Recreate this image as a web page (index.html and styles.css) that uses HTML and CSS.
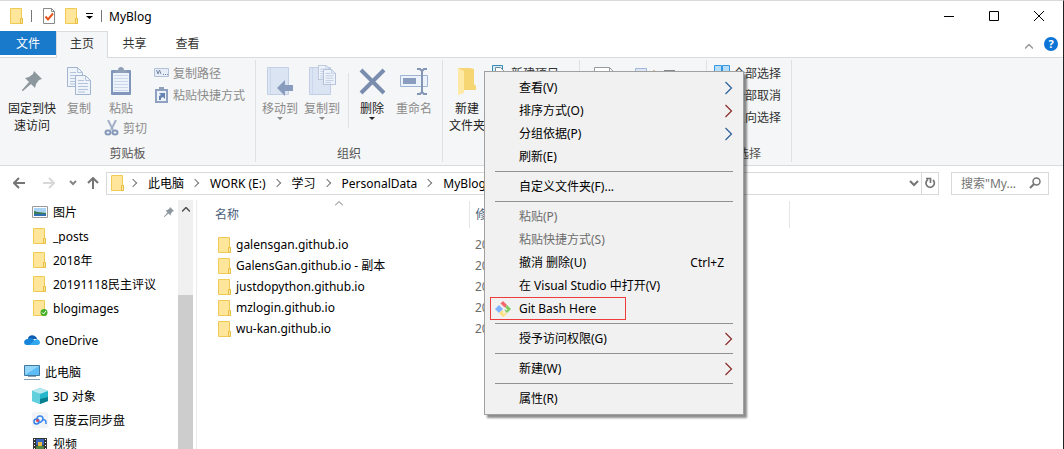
FILE: index.html
```html
<!DOCTYPE html>
<html lang="zh-CN">
  <head>
    <meta charset="utf-8">
    <meta name="viewport" content="width=device-width, initial-scale=1.0">
    <title>MyBlog</title>
    <link rel="stylesheet" href="styles.css">
  </head>
  <body>
    <svg class="sprite" aria-hidden="true">
      <symbol id="folder" viewBox="0 0 14 16">
        <path d="M.5.5h11v10h1v5H.5z" fill="#ffe69b" stroke="#efca55"/>
        <path d="M10.5 15.500v-5h2v5z" fill="#ffe69b" stroke="#e8bf45"/>
      </symbol>
      <symbol id="arrow" viewBox="0 0 8 14">
        <path d="M.5 1l6 6-6 6" fill="none" stroke="currentColor" stroke-width="1.200"/>
      </symbol>
      <symbol id="page" viewBox="0 0 16 20">
        <path d="M.5.5h10l5 5v14H.5z" fill="#eff4fb" stroke="#a3b4d0"/>
        <path d="M10.500.5v5h5M3 5.500h6M3 8.500h10M3 11.500h10M3 14.500h10M3 17h7" fill="none" stroke="#b4c3dc"/>
      </symbol>
      <symbol id="pin" viewBox="0 0 20 20">
        <path d="M12 0l8 8-3 1-3 4-1 4-4-4-8 7-1 0 0-1 7-8-4-4 4-1 4-3z" fill="#8d979e"/>
      </symbol>
      <symbol id="clip" viewBox="0 0 20 28">
        <rect y="3" width="20" height="25" rx="1" fill="#8196bb"/>
        <path d="M2 6h16v19H2z" fill="#edf3fb"/>
        <path d="M3 8.500h14M3 11.500h14M3 14.500h14M3 17.500h14M3 20.500h14M3 23.500h14" stroke="#ccd8ea"/>
        <path d="M4 3h3c0-4 6-4 6 0h3v3H4z" fill="#8f9fb8"/>
      </symbol>
      <symbol id="block" viewBox="0 0 26 28">
        <path d="M.5.5h21v27H.5z" fill="#dbe4f3" stroke="#c2cfe4"/>
        <path d="M3.500 1v26" stroke="#cbd7ea"/>
      </symbol>
    </svg>

    <header class="titlebar">
      <svg class="ico-folder"><use href="#folder"/></svg>
      <span class="divider"></span>
      <svg class="ico-check" viewBox="0 0 12 16"><path d="M.5.5h8l3 3v12H.5z" fill="#fff" stroke="#8a8a8a"/><path d="M8.500.5v3h3" fill="none" stroke="#8a8a8a"/><path d="M2.500 8.500l2.500 3 5-6" fill="none" stroke="#e8541d" stroke-width="2"/></svg>
      <svg class="ico-folder"><use href="#folder"/></svg>
      <svg class="ico-drop" viewBox="0 0 7 6"><path d="M0 0h7v1H0zM0 3h7L3.500 6z"/></svg>
      <span class="divider"></span>
      <h1 class="title">MyBlog</h1>
      <div class="window-buttons">
        <button aria-label="最小化"><svg viewBox="0 0 10 10"><path d="M0 5.500h10" stroke="#000"/></svg></button>
        <button aria-label="最大化"><svg viewBox="0 0 10 10"><path d="M.5.5h9v9h-9z" fill="none" stroke="#000"/></svg></button>
        <button aria-label="关闭"><svg viewBox="0 0 10 10"><path d="M0 0l10 10M10 0L0 10" stroke="#000"/></svg></button>
      </div>
    </header>

    <nav class="tabs">
      <button class="tab tab-file">文件</button>
      <button class="tab tab-active">主页</button>
      <button class="tab">共享</button>
      <button class="tab">查看</button>
      <button class="tab-tool" aria-label="折叠"><svg viewBox="0 0 8 5" class="ico-fold"><path d="M0 4.500l4-4 4 4" fill="none" stroke="#999" stroke-width="1.500"/></svg></button>
      <button class="tab-tool help">?</button>
    </nav>

    <section class="ribbon">
      <div class="group group-clipboard">
        <div class="group-body">
          <button class="big wide"><svg class="big-icon" viewBox="0 0 28 28"><use href="#pin" x="4" y="4" width="20" height="20"/></svg>固定到快<br>速访问</button>
          <button class="big" disabled><svg class="big-icon" viewBox="0 0 28 28"><use href="#page" x="2" width="16" height="20"/><use href="#page" x="10" y="8" width="16" height="20"/></svg>复制</button>
          <div class="stack">
            <button class="big" disabled><svg class="big-icon" viewBox="0 0 28 28"><use href="#clip" x="4" width="20" height="28"/></svg>粘贴</button>
            <button class="small" disabled><svg viewBox="0 0 16 16"><path d="M4 0l5 10M12 0L7 10" stroke="#a3b0c8" stroke-width="2"/><g fill="none" stroke="#8598ba" stroke-width="2"><ellipse cx="4" cy="12.500" rx="2.500" ry="2"/><ellipse cx="11" cy="12.500" rx="2.500" ry="2"/></g></svg>剪切</button>
          </div>
          <div class="stack rows">
            <button class="small" disabled><svg viewBox="0 0 16 16"><path d="M.5 3.500h14v8H.5z" fill="#e7eef8" stroke="#b3c1d8"/><path d="M2.500 5l1.500 4 1.500-4 1.500 4M9 9.500h1M11 9.500h1M13 9.500h1" fill="none" stroke="#7488a8"/></svg>复制路径</button>
            <button class="small" disabled><svg viewBox="0 0 16 16"><path d="M1 2h13v14H1z" fill="#8ea1c2"/><path d="M3 4h9v10H3z" fill="#edf3fb"/><path d="M5 0h5v3H5z" fill="#8f9fb8"/><path d="M5 13V9l2-1-2-2h6v6L9 10l-2 1v2z" fill="#6682b0"/></svg>粘贴快捷方式</button>
          </div>
        </div>
        <h2 class="group-title">剪贴板</h2>
      </div>

      <div class="group group-organize">
        <div class="group-body">
          <button class="big drop" disabled><svg class="big-icon" viewBox="0 0 28 28"><use href="#block" x="1" width="26" height="28"/><path d="M11 21l8-8v5h8v6h-8v5z" fill="#8a9cbd"/></svg>移动到</button>
          <button class="big drop" disabled><svg class="big-icon" viewBox="0 0 28 28"><use href="#block" x="1" width="26" height="28"/><use href="#page" x="10" y="-2" width="12" height="15"/><use href="#page" x="15" y="2" width="13" height="16"/></svg>复制到</button>
          <span class="rule"></span>
          <button class="big drop"><svg class="big-icon" viewBox="0 0 28 28"><path d="M3 3l23 23M26 3L3 26" stroke="#7b8daf" stroke-width="4"/></svg>删除</button>
          <button class="big" disabled><svg class="big-icon" viewBox="0 0 28 28"><path d="M.5 8.500h27v11H.5z" fill="#edf3fc" stroke="#9fb4d4"/><path d="M3 11h13v6H3z" fill="#8a9dbf"/><path d="M17 2h3l2 2 2-2h3M22 3v23M17 27h3l2-2 2 2h3" fill="none" stroke="#8395b5" stroke-width="2"/></svg>重命名</button>
        </div>
        <h2 class="group-title">组织</h2>
      </div>

      <div class="group group-new">
        <div class="group-body">
          <button class="big"><svg class="big-icon" viewBox="0 0 28 28"><path d="M5 1h12l4 1v15l2 2v4H10L5 26z" fill="#f6d673"/><path d="M5 1l6 3v22l-6 2z" fill="#ffe9a6"/></svg>新建<br>文件夹</button>
          <div class="stack rows">
            <button class="small"><svg viewBox="0 0 16 16"><path d="M.5.5h10v10H.5z" fill="#d5eefa" stroke="#3b8cb5"/><path d="M3.500 2.500h5l3 3v8h-8z" fill="#fff" stroke="#789"/></svg>新建项目</button>
          </div>
        </div>
      </div>

      <div class="group group-open">
        <div class="group-body">
          <svg class="big-icon" viewBox="0 0 28 28"><path d="M4.500.5h15l5 5v22h-20z" fill="#fff" stroke="#999"/><path d="M19.500.5v5h5" fill="none" stroke="#999"/></svg>
          <svg class="ico-open" viewBox="0 0 48 16"><path d="M1.500 1.500h11v9h-11z" fill="#dce6f6" stroke="#a5b7d6"/><path d="M4 4h6v4H4z" fill="#8d9cba"/><path d="M20 3v4" stroke="#c08a40"/><path d="M30 3h11v3H30z" fill="#888"/></svg>
        </div>
      </div>

      <div class="group group-select">
        <div class="group-body">
          <div class="stack rows">
            <button class="small"><svg viewBox="0 0 16 16"><path d="M.5.500h7v6h-7zM8.500.500h7v6h-7zM.500 8.500h7v6h-7zM8.500 8.500h7v6h-7z" fill="#b5dff9" stroke="#3897de"/></svg>全部选择</button>
            <button class="small"><svg viewBox="0 0 16 16"><path d="M.5.5h7v6h-7zM8.500.5h7v6h-7zM.5 8.500h7v6h-7zM8.500 8.500h7v6h-7z" fill="#fff" stroke="#9ab"/></svg>全部取消</button>
            <button class="small"><svg viewBox="0 0 16 16"><path d="M.5.5h7v6h-7zM8.500 8.500h7v6h-7z" fill="#b5dff9" stroke="#3897de"/></svg>反向选择</button>
          </div>
        </div>
        <h2 class="group-title">选择</h2>
      </div>
    </section>

    <div class="location">
      <button class="nav-button" aria-label="后退"><svg viewBox="0 0 12 12"><path d="M12 6H1M6 1L1 6l5 5" fill="none" stroke="#757575" stroke-width="2"/></svg></button>
      <button class="nav-button" aria-label="前进"><svg viewBox="0 0 12 12"><path d="M0 6h11M6 1l5 5-5 5" fill="none" stroke="#d8d8d8" stroke-width="2"/></svg></button>
      <button class="nav-button narrow" aria-label="最近"><svg viewBox="0 0 12 12"><path d="M3 4l3 3 3-3" fill="none" stroke="#858585" stroke-width="2"/></svg></button>
      <button class="nav-button" aria-label="向上"><svg viewBox="0 0 12 12"><path d="M6 12V1M1 6l5-5 5 5" fill="none" stroke="#757575" stroke-width="2"/></svg></button>
      <div class="address">
        <svg class="ico-folder"><use href="#folder"/></svg>
        <a class="crumb" href="#">此电脑</a>
        <a class="crumb" href="#">WORK (E:)</a>
        <a class="crumb" href="#">学习</a>
        <a class="crumb" href="#">PersonalData</a>
        <a class="crumb" href="#">MyBlog</a>
        <button class="address-drop" aria-label="历史"><svg viewBox="0 0 10 8"><path d="M1 2l4 4 4-4" fill="none" stroke="#757575" stroke-width="2"/></svg></button>
        <button class="refresh" aria-label="刷新"><svg viewBox="0 0 12 12"><path d="M4 2.500a4.200 4.200 0 1 0 5 .5M2 1.500h4.500V6" fill="none" stroke="#757575" stroke-width="1.700"/></svg></button>
      </div>
      <div class="search">
        <input type="text" aria-label="搜索" placeholder='搜索"My...'>
        <svg viewBox="0 0 12 12"><circle cx="7.500" cy="4.500" r="3.500" fill="none" stroke="#757575" stroke-width="1.500"/><path d="M5 7l-4 4" stroke="#757575" stroke-width="2"/></svg>
      </div>
    </div>

    <main class="content">
      <nav class="tree">
        <ul class="tree-list">
          <li><a class="node child" href="#"><svg viewBox="0 0 16 16"><path d="M.5 2.500h15v11H.5z" fill="#fff" stroke="#9a9a9a"/><path d="M2 4h12v8H2z" fill="#a9d4f5"/><path d="M2 7l4 1 8 1v1H2z" fill="#3d7a52"/><path d="M2 10h12v2H2z" fill="#2f70b5"/></svg>图片<svg class="pinned" viewBox="0 0 20 20"><use href="#pin"/></svg></a></li>
          <li><a class="node child" href="#"><svg><use href="#folder"/></svg>_posts</a></li>
          <li><a class="node child" href="#"><svg><use href="#folder"/></svg>2018年</a></li>
          <li><a class="node child" href="#"><svg><use href="#folder"/></svg>20191118民主评议</a></li>
          <li><a class="node child" href="#"><svg viewBox="0 0 16 16"><use href="#folder" x="1" width="14" height="16"/><circle cx="12" cy="12.500" r="3.500" fill="#43b02a"/><path d="M10 12.500l1.500 1.500 2.500-3" fill="none" stroke="#fff"/></svg>blogimages</a></li>
          <li class="root"><a class="node" href="#"><svg viewBox="0 0 16 16"><path d="M4 7c0-5 8-5 9 0z" fill="#0f5cb0"/><path d="M3 13c-4 0-4-6 1-6 2-2 5-1 6 1l4 5z" fill="#1684d8"/><path d="M5 13l6-5c2-2 5 0 5 2.500 0 1.500-1 2.500-3 2.500z" fill="#30a8ee"/></svg>OneDrive</a></li>
          <li class="root"><a class="node" href="#"><svg viewBox="0 0 16 16"><path d="M.5 1.500h15v10H.5z" fill="#5dbcf5" stroke="#41789c"/><path d="M1 2h14L1 11z" fill="#92d5fa"/><path d="M4 12.500h8M0 15.500h16" stroke="#8aa0b2"/></svg>此电脑</a></li>
          <li><a class="node child" href="#"><svg viewBox="0 0 16 16"><path d="M8 0l8 3v10l-8 3-8-3V3z" fill="#24b6cb"/><path d="M8 0l8 3-8 3-8-3z" fill="#b7e9ef"/><path d="M0 3l8 3v10l-8-3z" fill="#62cfdc"/><path d="M8 16v-5l8-2v4z" fill="#087f91"/></svg>3D 对象</a></li>
          <li><a class="node child" href="#"><svg viewBox="0 0 16 16"><rect width="16" height="16" rx="2" fill="#f1f3f6"/><g fill="none" stroke-width="1.500"><circle cx="4.500" cy="9.500" r="2.500" stroke="#2f80e8"/><path d="M5 7c0-4 6-4 6 0-1 3-3 4-5 3M11 8c3-1 3 2 3 4" stroke="#3888ee"/></g><circle cx="5.500" cy="8.500" r="1.500" fill="#e54357"/></svg>百度云同步盘</a></li>
          <li><a class="node child" href="#"><svg viewBox="0 0 16 16"><path d="M1 2h14v13H1z" fill="#333"/><path d="M4 3h8v6H4z" fill="#3766bc"/><path d="M6 6h4v4H6z" fill="#e7b93e"/><path d="M4 10h8v4H4z" fill="#548744"/><path d="M2.500 3v12M13.500 3v12" stroke="#fff" stroke-dasharray="1 2"/></svg>视频</a></li>
        </ul>
        <div class="scrollbar"><svg viewBox="0 0 8 5"><path d="M0 4.500l4-4 4 4" fill="none" stroke="#505050" stroke-width="1.500"/></svg><span class="thumb"></span></div>
      </nav>
      <div class="files">
        <table class="file-table">
          <thead>
            <tr><th class="col-name">名称<svg class="sort" viewBox="0 0 8 5"><path d="M0 4.500l4-4 4 4" fill="none" stroke="#777"/></svg></th><th class="col-date">修改日期</th><th></th></tr>
          </thead>
          <tbody>
            <tr><td><a href="#"><svg class="ico-folder"><use href="#folder"/></svg>galensgan.github.io</a></td><td>2019</td><td></td></tr>
            <tr><td><a href="#"><svg class="ico-folder"><use href="#folder"/></svg>GalensGan.github.io - 副本</a></td><td>2019</td><td></td></tr>
            <tr><td><a href="#"><svg class="ico-folder"><use href="#folder"/></svg>justdopython.github.io</a></td><td>2019</td><td></td></tr>
            <tr><td><a href="#"><svg class="ico-folder"><use href="#folder"/></svg>mzlogin.github.io</a></td><td>2019</td><td></td></tr>
            <tr><td><a href="#"><svg class="ico-folder"><use href="#folder"/></svg>wu-kan.github.io</a></td><td>2019</td><td></td></tr>
          </tbody>
        </table>
      </div>
    </main>

    <div class="menu" role="menu">
      <button class="item" role="menuitem">查看(V)<svg class="more blue"><use href="#arrow"/></svg></button>
      <button class="item" role="menuitem">排序方式(O)<svg class="more"><use href="#arrow"/></svg></button>
      <button class="item" role="menuitem">分组依据(P)<svg class="more blue"><use href="#arrow"/></svg></button>
      <button class="item" role="menuitem">刷新(E)</button>
      <hr>
      <button class="item" role="menuitem">自定义文件夹(F)...</button>
      <hr>
      <button class="item" role="menuitem" disabled>粘贴(P)</button>
      <button class="item" role="menuitem" disabled>粘贴快捷方式(S)</button>
      <button class="item" role="menuitem">撤消 删除(U)<span class="shortcut">Ctrl+Z</span></button>
      <button class="item" role="menuitem">在 Visual Studio 中打开(V)</button>
      <button class="item git" role="menuitem"><svg class="git-icon" viewBox="0 0 16 16"><path d="M5 3l3-3 4 4-2 3-2-1z" fill="#f5696e"/><path d="M4 4l4 4-4 4-4-4z" fill="#80b3ff"/><path d="M12 4l4 4-4 4-3-3z" fill="#80cc60"/><path d="M8 9l4 4-4 3-4-4z" fill="#ffe080"/><path d="M5 3l4 4v6M8 6l4 3" fill="none" stroke="#f1f1f1" stroke-width="1.500"/></svg><span>Git Bash Here</span></button>
      <hr>
      <button class="item" role="menuitem">授予访问权限(G)<svg class="more"><use href="#arrow"/></svg></button>
      <hr>
      <button class="item" role="menuitem">新建(W)<svg class="more"><use href="#arrow"/></svg></button>
      <hr>
      <button class="item" role="menuitem">属性(R)</button>
    </div>
  </body>
</html>
```
FILE: styles.css
```css
* {
  box-sizing: border-box;
}
body {
  display: flex;
  flex-direction: column;
  height: 100vh;
  margin: 0;
  overflow: hidden;
  border-top: 1px solid #d9d9d9;
  border-right: 1px solid #222;
  background: #fff;
  color: #000;
  font: 12px/17px "Noto Sans", "Noto Sans CJK SC", sans-serif;
}
button {
  padding: 0;
  border: 0;
  background: none;
  color: inherit;
  font: inherit;
}
a {
  color: inherit;
  text-decoration: none;
}
ul {
  margin: 0;
  padding: 0;
  list-style: none;
}
svg {
  flex: none;
}
.sprite {
  position: absolute;
  width: 0;
  height: 0;
}
.ico-folder {
  width: 14px;
  height: 16px;
}

/* title bar */
.titlebar {
  display: flex;
  flex: none;
  align-items: center;
  height: 30px;
  padding: 0 2px 0 10px;
}
.divider {
  width: 1px;
  height: 12px;
  margin: 0 11px 0 7px;
  background: #777;
}
.ico-check {
  width: 12px;
  height: 16px;
  margin-right: 10px;
}
.ico-drop {
  width: 7px;
  height: 6px;
  margin-left: 7px;
}
.titlebar .ico-drop + .divider {
  margin: 0 7px 0 8px;
}
.title {
  margin: 0;
  font-size: 12px;
  font-weight: normal;
}
.window-buttons {
  display: flex;
  margin-left: auto;
}
.window-buttons button {
  width: 45px;
  height: 28px;
}
.window-buttons svg {
  width: 10px;
  height: 10px;
}

/* tabs */
.tabs {
  display: flex;
  flex: none;
  height: 27px;
  border-bottom: 1px solid #dadbdc;
}
.tab {
  width: 53px;
  height: 24px;
  color: #333;
}
.tab-file {
  width: 56px;
  background: #1979ca;
  color: #fff;
}
.tab-active {
  width: 52px;
  height: 27px;
  padding-bottom: 3px;
  border: 1px solid #dadbdc;
  border-bottom: 0;
  background: #f5f6f7;
}
.tab-tool {
  align-self: center;
  margin-right: 11px;
}
.tab + .tab-tool {
  margin-left: auto;
}
.ico-fold {
  width: 8px;
  height: 5px;
}
.help {
  width: 14px;
  height: 14px;
  margin-right: 5px;
  border-radius: 50%;
  background: #0c74d6;
  color: #fff;
  font-size: 11px;
  font-weight: bold;
  line-height: 14px;
}

/* ribbon */
.ribbon {
  display: flex;
  flex: none;
  height: 108px;
  padding: 2px 0 3px;
  border-bottom: 1px solid #dadbdc;
  background: #f5f6f7;
}
.group {
  display: flex;
  flex: none;
  flex-direction: column;
  justify-content: space-between;
  border-right: 1px solid #e0e1e3;
}
.group-body {
  display: flex;
  align-items: flex-start;
  padding: 7px 3px 0;
}
.group-title {
  margin: 0;
  color: #555;
  font-size: 12px;
  font-weight: normal;
  text-align: center;
}
.group-clipboard {
  width: 256px;
}
.group-organize {
  width: 187px;
}
.group-new {
  width: 137px;
}
.group-open {
  width: 127px;
}
.group-select {
  width: 85px;
}
.big {
  display: block;
  width: 42px;
  color: #222;
  text-align: center;
  white-space: nowrap;
}
.wide {
  width: 58px;
  margin-right: -3px;
}
.big-icon {
  display: block;
  width: 28px;
  height: 28px;
  margin: 0 auto 5px;
  overflow: visible;
}
.big:disabled,
.small:disabled {
  color: #8b8b8b;
}
.drop::after {
  content: "";
  display: block;
  width: 0;
  margin: 0 auto;
  border: 3px solid transparent;
  border-top-color: currentColor;
  border-bottom: 0;
}
.rule {
  height: 55px;
  margin: 6px 2px 0 5px;
  border-left: 1px solid #e0e1e3;
}
.stack {
  display: flex;
  flex-direction: column;
  gap: 2px;
}
.rows {
  gap: 4px;
  margin: -3px 0 0 4px;
}
.small {
  display: flex;
  align-items: center;
  gap: 3px;
  height: 18px;
  color: #333;
  white-space: nowrap;
}
.small svg {
  width: 16px;
  height: 16px;
}
.stack .big + .small {
  margin-left: 4px;
}
.group-clipboard .rows {
  margin-left: 7px;
}
.group-open .big-icon {
  margin: 0 16px 0 7px;
}
.ico-open {
  width: 48px;
  height: 16px;
}

/* address bar */
.location {
  display: flex;
  flex: none;
  align-items: center;
  height: 34px;
  padding: 0 14px 0 10px;
}
.nav-button {
  width: 18px;
  height: 18px;
  margin-right: 12px;
}
.nav-button svg {
  display: block;
  width: 12px;
  height: 12px;
  margin: auto;
}
.nav-button + .nav-button {
  margin-right: 8px;
}
.nav-button + .narrow {
  width: 14px;
  margin-right: 4px;
}
.narrow + .nav-button {
  margin-right: 4px;
}
.address {
  display: flex;
  flex: 1;
  align-items: center;
  height: 23px;
  padding-left: 4px;
  border: 1px solid #d9d9d9;
}
.crumb::before {
  content: "";
  display: inline-block;
  width: 5px;
  height: 5px;
  margin: 0 12px 2px 5px;
  border: solid #777;
  border-width: 1px 1px 0 0;
  transform: rotate(45deg);
}
.crumb + .crumb::before {
  margin-left: 8px;
}
.address-drop {
  margin-left: auto;
  padding: 0 2px;
}
.address-drop svg {
  display: block;
  width: 10px;
  height: 8px;
}
.refresh {
  width: 17px;
  height: 21px;
  border-left: 1px solid #d9d9d9;
}
.refresh svg {
  display: block;
  width: 12px;
  height: 12px;
  margin: auto;
}
.search {
  display: flex;
  align-items: center;
  width: 98px;
  height: 23px;
  margin-left: 12px;
  padding: 0 7px 0 9px;
  border: 1px solid #d9d9d9;
}
.search input {
  flex: 1;
  min-width: 0;
  padding: 0;
  border: 0;
  outline: 0;
  font: inherit;
}
.search input::placeholder {
  color: #757575;
}
.search svg {
  width: 12px;
  height: 12px;
}

/* folder tree */
.content {
  display: flex;
  flex: 1;
  min-height: 0;
  overflow: hidden;
}
.tree {
  display: flex;
  flex: none;
  width: 197px;
  padding-right: 3px;
  border-right: 1px solid #ececec;
}
.tree-list {
  flex: 1;
}
.root {
  margin-top: 8px;
}
.node {
  display: flex;
  align-items: center;
  gap: 5px;
  height: 24px;
  padding-left: 24px;
}
.child {
  padding-left: 32px;
}
.node svg {
  width: 16px;
  height: 16px;
}
.node .pinned {
  width: 10px;
  height: 10px;
  margin: 0 4px 0 auto;
}
.scrollbar {
  width: 15px;
  padding-top: 5px;
  background: #f0f0f0;
  text-align: center;
}
.scrollbar svg {
  display: block;
  width: 8px;
  height: 5px;
  margin: 2px auto 0;
}
.thumb {
  display: block;
  height: 100%;
  margin-top: 83px;
  background: #cdcdcd;
}

/* file list */
.files {
  flex: 1;
  padding-top: 1px;
}
.file-table {
  width: 100%;
  border-collapse: collapse;
  table-layout: fixed;
}
.file-table th {
  position: relative;
  height: 27px;
  padding: 0 0 0 6px;
  border-right: 1px solid #e5e5e5;
  color: #4c607a;
  font-weight: normal;
  text-align: left;
}
.file-table th:last-child {
  border: 0;
}
.file-table .col-name {
  width: 272px;
  padding-left: 18px;
}
.file-table .col-date {
  width: 320px;
}
.sort {
  position: absolute;
  top: 0;
  left: 51%;
  width: 8px;
  height: 5px;
}
.file-table tbody::before {
  content: "";
  display: block;
  height: 6px;
}
.file-table td {
  height: 21px;
  padding: 0 0 0 6px;
  color: #6d6d6d;
}
.file-table td:first-child {
  padding-left: 21px;
  color: #000;
}
.file-table a {
  display: flex;
  align-items: center;
  gap: 4px;
}

/* context menu */
.menu {
  position: absolute;
  top: 71px;
  left: 484px;
  width: 260px;
  padding: 4px 2px;
  border: 1px solid #a0a0a0;
  background: #f1f1f1;
  box-shadow: 3px 3px 2px rgba(0, 0, 0, 0.45);
}
.menu hr {
  height: 1px;
  margin: 3px 8px;
  border: 0;
  background: #919191;
}
.item {
  display: flex;
  align-items: center;
  width: 100%;
  height: 23px;
  padding: 0 8px 0 32px;
}
.item:disabled {
  color: #6d6d6d;
}
.more {
  width: 8px;
  height: 14px;
  margin-left: auto;
  color: #8b2a2a;
}
.blue {
  color: #2a5f9b;
}
.shortcut {
  margin-left: auto;
  padding-right: 9px;
}
.git {
  width: 136px;
  margin-left: 3px;
  padding: 0 0 0 4px;
  border: 1px solid #ee3b3b;
}
.git-icon {
  width: 16px;
  height: 16px;
  margin-right: 8px;
}
```
